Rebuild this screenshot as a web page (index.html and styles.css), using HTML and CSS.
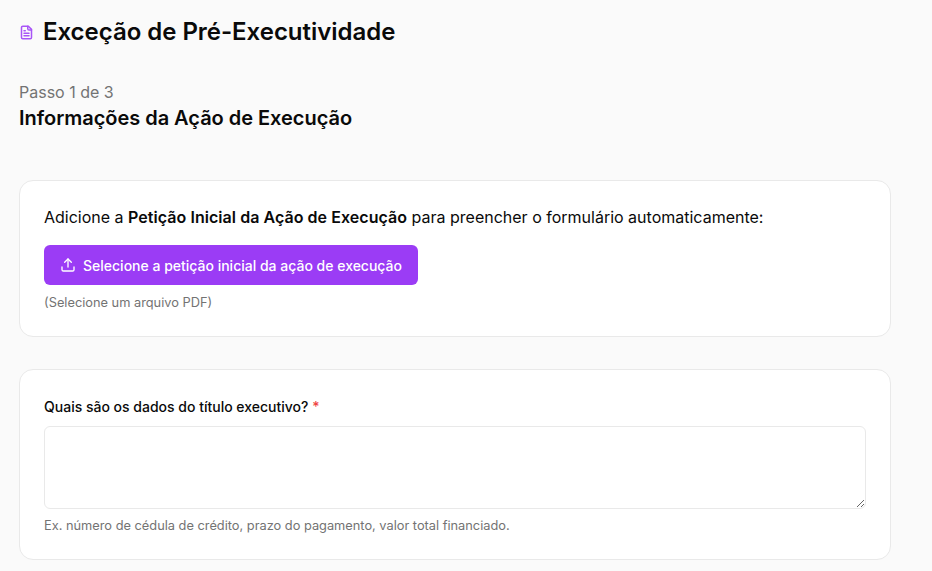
FILE: index.html
```html
<!DOCTYPE html>
<html lang="pt-BR">
<head>
    <meta charset="UTF-8">
    <meta name="viewport" content="width=device-width, initial-scale=1.0">
    <title>Exceção de Pré-Executividade</title>
    <link rel="stylesheet" href="styles.css">
</head>
<body>
    <div class="page">
        <div class="page-title">
            <svg class="title-icon" viewBox="0 0 24 24" fill="none" stroke="currentColor" stroke-width="2.4" stroke-linecap="round" stroke-linejoin="round">
                <path d="M15 2H6a2 2 0 0 0-2 2v16a2 2 0 0 0 2 2h12a2 2 0 0 0 2-2V7z"/>
                <path d="M14 2v4a2 2 0 0 0 2 2h4"/>
                <path d="M8 13h8"/>
                <path d="M8 17h8"/>
                <path d="M8 9h2"/>
            </svg>
            <h1>Exceção de Pré-Executividade</h1>
        </div>

        <div class="step">
            <p class="step-count">Passo 1 de 3</p>
            <h2>Informações da Ação de Execução</h2>
        </div>

        <section class="card upload-card">
            <p class="upload-text">Adicione a <strong>Petição Inicial da Ação de Execução</strong> para preencher o formulário automaticamente:</p>
            <button class="upload-button" type="button">
                <svg class="upload-icon" viewBox="0 0 24 24" fill="none" stroke="currentColor" stroke-width="2" stroke-linecap="round" stroke-linejoin="round">
                    <path d="M12 3v12"/>
                    <path d="m17 8-5-5-5 5"/>
                    <path d="M21 15v4a2 2 0 0 1-2 2H5a2 2 0 0 1-2-2v-4"/>
                </svg>
                Selecione a petição inicial da ação de execução
            </button>
            <p class="hint upload-hint">(Selecione um arquivo PDF)</p>
        </section>

        <section class="card field-card">
            <label class="field-label" for="titulo">Quais são os dados do título executivo? <span class="required">*</span></label>
            <textarea id="titulo" class="field-input"></textarea>
            <p class="hint">Ex. número de cédula de crédito, prazo do pagamento, valor total financiado.</p>
        </section>
    </div>
</body>
</html>
```

FILE: styles.css
```css
html, body {
    height: 100%;
    overflow: hidden;
}

body {
    margin: 0;
    background-color: #fafafa;
    color: #0a0a0a;
    font-family: Inter, "Liberation Sans", sans-serif;
}

.page {
    width: 872px;
    padding: 16px 0 0 19px;
}

.page-title {
    display: flex;
    align-items: center;
    gap: 9px;
    height: 32px;
}

.title-icon {
    width: 15px;
    height: 15px;
    color: #a855f7;
}

h1 {
    margin: 0;
    font-size: 24px;
    line-height: 32px;
    font-weight: 600;
    letter-spacing: -0.03px;
}

.step {
    margin-top: 32px;
}

.step-count {
    margin: 0;
    font-size: 16px;
    line-height: 24px;
    color: #737373;
}

h2 {
    margin: 1px 0 0;
    font-size: 20px;
    line-height: 26px;
    font-weight: 600;
    letter-spacing: -0.03px;
}

.card {
    box-sizing: border-box;
    background-color: #fff;
    border: 1px solid #e9e9e9;
    border-radius: 14px;
    padding: 0 24px;
}

.upload-card {
    height: 157px;
    margin-top: 49px;
    padding-top: 24px;
}

.upload-text {
    margin: 0;
    font-size: 16px;
    line-height: 24px;
}

.upload-text strong {
    font-weight: 600;
    letter-spacing: 0.05px;
}

.upload-button {
    display: flex;
    align-items: center;
    gap: 7px;
    height: 40px;
    margin-top: 16px;
    padding: 0 16px;
    border: none;
    border-radius: 6px;
    background-color: #9b3cf5;
    color: #fff;
    font-family: inherit;
    font-size: 14px;
    font-weight: 500;
}

.upload-icon {
    width: 16px;
    height: 16px;
}

.hint {
    margin: 8px 0 0;
    font-size: 12.8px;
    line-height: 18px;
    color: #737373;
}

.upload-hint {
    margin-top: 9px;
}

.field-card {
    height: 191px;
    margin-top: 32px;
    padding-top: 27px;
}

.field-label {
    display: block;
    font-size: 14px;
    line-height: 20px;
    font-weight: 500;
}

.required {
    color: #ef4444;
}

.field-input {
    display: block;
    box-sizing: border-box;
    width: 100%;
    height: 83px;
    margin-top: 9px;
    border: 1px solid #e9e9e9;
    border-radius: 6px;
    background-color: #fff;
}
```
